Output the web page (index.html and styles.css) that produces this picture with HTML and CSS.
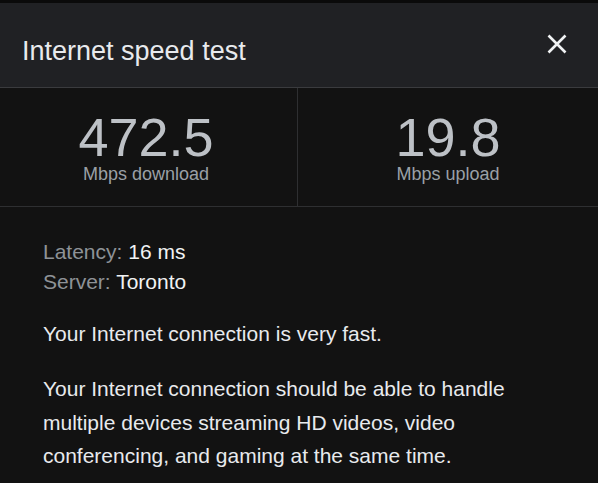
FILE: index.html
```html
<!DOCTYPE html>
<html lang="en">
<head>
<meta charset="utf-8">
<title>Internet speed test</title>
<link rel="stylesheet" href="styles.css">
</head>
<body>
<div class="topstrip"></div>
<div class="dialog">
  <header class="header">
    <h1 class="title">Internet speed test</h1>
    <button class="close" aria-label="Close">
      <svg width="20" height="20" viewBox="0 0 20 20"><path d="M1.5 1.5 L18.5 18.5 M18.5 1.5 L1.5 18.5" stroke="#f1f3f4" stroke-width="2.6" fill="none"/></svg>
    </button>
  </header>
  <section class="stats">
    <div class="stat stat-left">
      <div class="stat-num">472.5</div>
      <div class="stat-label">Mbps download</div>
    </div>
    <div class="stat">
      <div class="stat-num">19.8</div>
      <div class="stat-label">Mbps upload</div>
    </div>
  </section>
  <section class="details">
    <div class="meta"><span class="meta-key">Latency:</span> <span class="meta-val">16 ms</span></div>
    <div class="meta"><span class="meta-key">Server:</span> <span class="meta-val">Toronto</span></div>
    <p class="para para-first">Your Internet connection is very fast.</p>
    <p class="para">Your Internet connection should be able to handle multiple devices streaming HD videos, video conferencing, and gaming at the same time.</p>
  </section>
</div>
</body>
</html>
```

FILE: styles.css
```css
* { box-sizing: border-box; }
html, body {
  margin: 0;
  padding: 0;
  background: #121212;
  font-family: "Liberation Sans", Arial, sans-serif;
}
.topstrip {
  height: 3px;
  background: #0a0a0a;
}
.header {
  display: flex;
  justify-content: space-between;
  align-items: flex-start;
  height: 85px;
  padding: 32px 31px 0 22px;
  background: #202124;
  border-bottom: 1px solid #3a3b3e;
}
.title {
  margin: 0;
  font-size: 27px;
  line-height: 32px;
  font-weight: 400;
  color: #e8eaed;
}
.close {
  margin: -1px 0 0 0;
  padding: 0;
  border: 0;
  background: none;
  width: 20px;
  height: 20px;
  display: block;
}
.close svg { display: block; }
.stats {
  display: flex;
  border-bottom: 1px solid #2e2f31;
  background: #121212;
}
.stat {
  flex: 1;
  text-align: center;
  padding: 22px 0 22px;
}
.stat-left {
  flex: 0 0 298px;
  padding-right: 5px;
  border-right: 1px solid #2e2f31;
}
.stat-num {
  font-size: 54px;
  line-height: 54px;
  color: #bdc1c6;
}
.stat-label {
  font-size: 18px;
  line-height: 20px;
  color: #9aa0a6;
}
.details {
  padding: 30px 43px 0 43px;
}
.meta {
  font-size: 21px;
  line-height: 30px;
}
.meta-key { color: #8e9297; }
.meta-val { color: #f1f3f4; }
.para {
  margin: 21px 0 0 0;
  font-size: 21px;
  line-height: 33.75px;
  color: #e8eaed;
}
.para-first { margin-top: 20px; }
```
